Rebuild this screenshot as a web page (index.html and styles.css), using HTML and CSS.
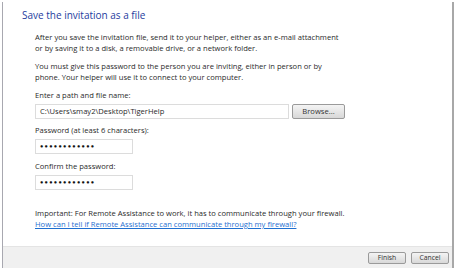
FILE: index.html
```html
<!DOCTYPE html>
<html>
<head>
<meta charset="utf-8">
<link rel="stylesheet" href="styles.css">
</head>
<body>
<div class="dialog">
  <div class="content">
    <h1 class="title">Save the invitation as a file</h1>
    <div class="body">
      <p class="para">After you save the invitation file, send it to your helper, either as an e-mail attachment<br>or by saving it to a disk, a removable drive, or a network folder.</p>
      <p class="para">You must give this password to the person you are inviting, either in person or by<br>phone. Your helper will use it to connect to your computer.</p>
      <label class="label">Enter a path and file name:</label>
      <div class="row">
        <div class="input path">C:\Users\smay2\Desktop\TigerHelp</div>
        <div class="btn browse">Browse...</div>
      </div>
      <label class="label">Password (at least 6 characters):</label>
      <div class="input pw">●●●●●●●●●●●●</div>
      <label class="label">Confirm the password:</label>
      <div class="input pw">●●●●●●●●●●●●</div>
      <p class="important">Important: For Remote Assistance to work, it has to communicate through your firewall.<br><a class="link" href="#">How can I tell if Remote Assistance can communicate through my firewall?</a></p>
    </div>
  </div>
  <div class="footer">
    <div class="btn">Finish</div>
    <div class="btn">Cancel</div>
  </div>
</div>
</body>
</html>
```
FILE: styles.css
```css
html, body {
  margin: 0;
  padding: 0;
  background: #ffffff;
}
body {
  width: 460px;
  height: 268px;
  overflow: hidden;
  font-family: "Open Sans", "Noto Sans", sans-serif;
  color: #2a2a2a;
}
.dialog {
  margin: 2px 0 0 2px;
  width: 452px;
  height: 266px;
  border-left: 1px solid #a8a8b0;
  border-right: 2px solid #a8a8a8;
  display: flex;
  flex-direction: column;
  box-sizing: border-box;
}
.content {
  flex: 1;
  padding: 6px 0 0 19px;
}
.title {
  margin: 0;
  font-size: 10px;
  font-weight: 400;
  color: #1e3c9e;
  line-height: 14px;
}
.body {
  padding-left: 13px;
  padding-top: 10px;
  font-size: 7.6px;
  line-height: 11px;
}
.para {
  margin: 0 0 7px 0;
}
.label {
  display: block;
  line-height: 11px;
  margin-bottom: 3px;
}
.row {
  display: flex;
  gap: 3px;
  margin-bottom: 6px;
}
.input {
  box-sizing: border-box;
  height: 15px;
  border: 1px solid #dcdcdc;
  padding: 0 4px;
  line-height: 13px;
  background: #fff;
}
.path {
  width: 254px;
}
.pw {
  width: 98px;
  font-size: 5.5px;
  letter-spacing: 1.3px;
  margin-bottom: 7px;
  color: #111;
}
.btn {
  box-sizing: border-box;
  height: 15px;
  width: 53px;
  border: 1px solid #9a9a9a;
  border-radius: 2px;
  background: linear-gradient(#f4f4f4, #e6e6e6 50%, #d8d8d8);
  text-align: center;
  line-height: 13px;
  font-size: 7.6px;
  color: #333;
}
.important {
  margin: 18px 0 0 0;
}
.link {
  color: #1f6fd0;
  text-decoration: underline;
}
.footer {
  height: 21px;
  background: #f0f0f0;
  border-top: 1px solid #e4e4e4;
  display: flex;
  justify-content: flex-end;
  align-items: center;
  gap: 5px;
  padding-right: 3px;
}
.footer .btn {
  width: 38px;
  height: 12px;
  line-height: 10px;
  font-size: 6.8px;
}
```
